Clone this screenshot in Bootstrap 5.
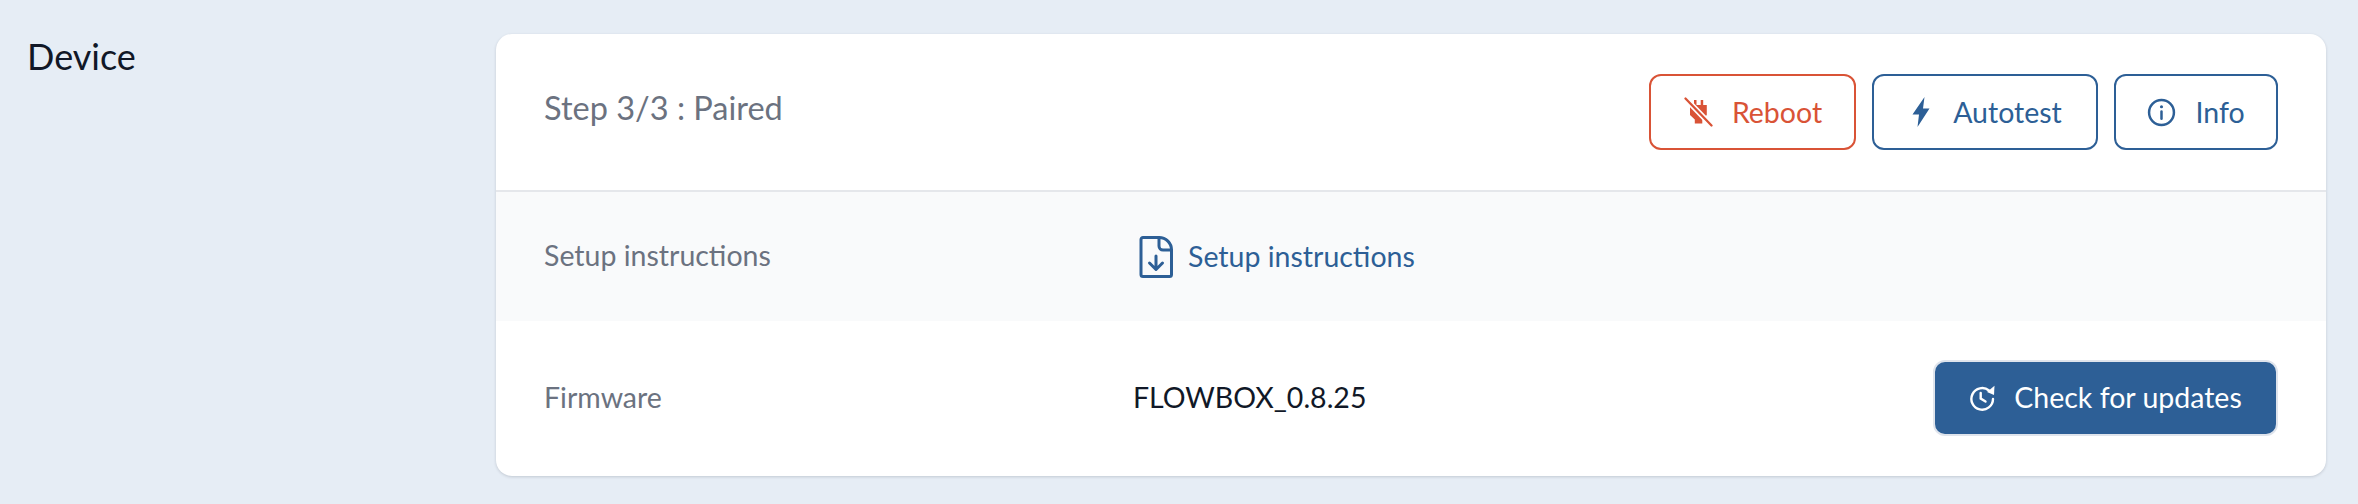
<!DOCTYPE html>
<html lang="en">
<head>
  <meta charset="UTF-8">
  <title>Device</title>
  <link rel="stylesheet" href="https://cdn.jsdelivr.net/npm/bootstrap@5.3.2/dist/css/bootstrap.min.css">
  <style>
    body {
      background: #e6edf5;
      font-family: "Lato", "Noto Sans", sans-serif;
      font-size: 28.5px;
      color: #111827;
    }
    .page-wrap { padding: 34px 32px 28px 27px; }
    .side-title { width: 469px; flex: none; font-size: 36px; line-height: 44px; color: #111827; }
    .device-card { border-radius: 16px; border: 0; box-shadow: 0 1px 3px rgba(31,41,55,.18); overflow: hidden; background: #fff; }
    .card-head { height: 158px; padding: 0 48px; border-bottom: 2px solid #e5e7eb; }
    .step-text { font-size: 32.5px; color: #6b7280; padding-bottom: 8px; }
    .info-row { padding: 0 48px; }
    .row-a { height: 129px; background: #f9fafb; }
    .row-b { height: 155px; }
    .row-label { width: 589px; flex: none; color: #6b7280; padding-bottom: 2px; }
    .row-value { padding-bottom: 2px; }
    .btn-set { gap: 16px; }
    .act-btn { height: 76px; font-size: 28.5px; border-width: 2px; border-radius: 12px; display: inline-flex; align-items: center; justify-content: center; gap: 19px; padding: 0; background: #fff; }
    .act-red { width: 207px; color: #d95336; border-color: #d95336; }
    .act-blue { color: #2d5f96; border-color: #2d5f96; }
    .w-auto-test { width: 226px; gap: 23px; padding-left: 4px; }
    .w-info { width: 164px; }
    .act-fill { width: 345px; height: 76px; margin-bottom: 2px; background: #2d5f96; color: #fff; border: 2px solid #dfe4ec; }
    .doc-link { color: #2d5f96; text-decoration: none; gap: 15px; margin-left: 6px; }
    .ico { flex: none; display: block; }
  </style>
</head>
<body>
<div class="page-wrap d-flex">
  <div class="side-title">Device</div>
  <div class="flex-grow-1 device-card">
    <div class="card-head d-flex align-items-center justify-content-between">
      <div class="step-text">Step 3/3 : Paired</div>
      <div class="d-flex btn-set">
        <button class="btn act-btn act-red" type="button">
          <svg class="ico" width="30" height="30" viewBox="0 0 30 30" fill="currentColor"><path d="M11 3h2.500v5h4.200V3h2.500v5h3.600v10l-4.500 4.500v4h-7.500v-4L7 18V8h4z"/><path d="M1 0l28 29" stroke="#fff" stroke-width="5.500"/><path d="M2.500 1.500l26 27" stroke="currentColor" stroke-width="2.300" stroke-linecap="round"/></svg>
          Reboot
        </button>
        <button class="btn act-btn act-blue w-auto-test" type="button">
          <svg class="ico" width="18" height="30" viewBox="0 0 18 30" fill="currentColor"><path d="M12.500 0 .5 17.500H7L5.500 30 17.500 11.500H11z"/></svg>
          Autotest
        </button>
        <button class="btn act-btn act-blue w-info" type="button">
          <svg class="ico" width="29" height="29" viewBox="0 0 28 28" fill="none" stroke="currentColor" stroke-width="2.400"><circle cx="14" cy="14" r="12"/><path d="M14 13v7" stroke-linecap="round"/><circle cx="14" cy="8.500" r="1.500" fill="currentColor" stroke="none"/></svg>
          Info
        </button>
      </div>
    </div>
    <div class="info-row row-a d-flex align-items-center">
      <div class="row-label">Setup instructions</div>
      <a class="doc-link d-flex align-items-center" href="#">
        <svg class="ico" width="34" height="42" viewBox="0 0 34 42" fill="none" stroke="currentColor" stroke-width="3" stroke-linejoin="round" stroke-linecap="round"><path d="M4 1.500h16C27 1.500 32.500 7 32.500 14v24.500a2 2 0 0 1-2 2H4a2 2 0 0 1-2-2v-35a2 2 0 0 1 2-2z"/><path d="M20 1.500V10a4 4 0 0 0 4 4h8.500"/><path d="M17 20v13M10.500 27l6.500 6.500 6.500-6.500"/></svg>
        Setup instructions
      </a>
    </div>
    <div class="info-row row-b d-flex align-items-center justify-content-between">
      <div class="d-flex align-items-center">
        <div class="row-label">Firmware</div>
        <div class="row-value">FLOWBOX_0.8.25</div>
      </div>
      <button class="btn act-btn act-fill" type="button">
        <svg class="ico" width="26" height="26" viewBox="0 0 26 26" fill="none" stroke="currentColor" stroke-width="2.400" stroke-linecap="round"><path d="M20 5.500A10.800 10.800 0 1 0 24 14"/><path d="M11.700 8v5.500l4.800 3"/><path d="M18 7 25.500 .8 25 10z" fill="currentColor" stroke="none"/></svg>
        Check for updates
      </button>
    </div>
  </div>
</div>
<script src="https://cdn.jsdelivr.net/npm/bootstrap@5.3.2/dist/js/bootstrap.bundle.min.js"></script>
</body>
</html>
